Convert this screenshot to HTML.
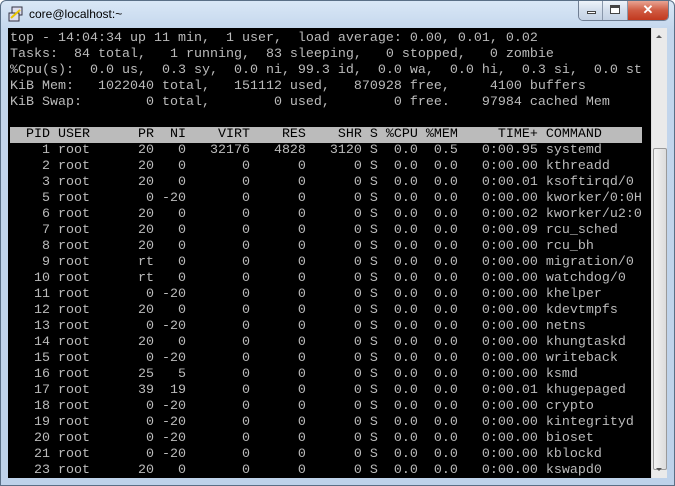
<!DOCTYPE html>
<html><head><style>
*{margin:0;padding:0;box-sizing:border-box}
body{width:675px;height:486px;overflow:hidden;background:#fff;position:relative;font-family:"Liberation Sans",sans-serif}
.frame{position:absolute;left:0;top:0;width:675px;height:486px;border:1px solid #5a6f86;border-radius:6px 6px 0 0;background:linear-gradient(#d9e7f6,#c3d6ec 30px,#bed2ea);}
.title{position:absolute;left:28px;top:6px;font-size:12px;color:#000}
.icon{position:absolute;left:7px;top:5px;width:16px;height:16px}
.btns{position:absolute;left:577px;top:0;height:20px;width:91px;border:1px solid #6f7e93;border-top:none;border-radius:0 0 5px 5px;overflow:hidden;display:flex}
.b{width:25px;height:19px;background:linear-gradient(#eef3fa,#d3deec 50%,#c4d2e4);border-right:1px solid #8a98ab;position:relative}
.c{width:41px;height:19px;background:linear-gradient(#e8a493,#cf5a41 50%,#c2391f);position:relative;color:#fff;font-weight:bold;font-size:13px;text-align:center;line-height:18px}
.term{position:absolute;left:8px;top:28px;width:643px;height:450px;background:#000}
pre{position:absolute;left:2px;top:3px;font-family:"Liberation Mono",monospace;font-size:13.33px;line-height:16px;color:#bbbbbb;white-space:pre}
.hl{background:#bbbbbb;color:#000;display:inline-block;width:632px}
.sb{position:absolute;left:651px;top:28px;width:16px;height:450px;background:#eaeaea;border-left:1px solid #ddd}
.thumb{position:absolute;left:1px;top:120px;width:14px;height:322px;border:1px solid #9a9a9a;border-radius:2px;background:linear-gradient(90deg,#f2f2f2,#dcdcdc)}
.ar{position:absolute;left:4px;width:0;height:0;border-left:3px solid transparent;border-right:3px solid transparent}
</style></head><body>
<div class="frame">
<svg class="icon" viewBox="0 0 16 16"><rect x="4" y="1" width="10" height="8" fill="#dde" stroke="#334"/><rect x="1" y="7" width="10" height="8" fill="#dde" stroke="#334"/><path d="M3 12 L12 4" stroke="#e8c400" stroke-width="2"/></svg>
<div class="title">core@localhost:~</div>
<div class="btns"><div class="b"><div style="position:absolute;left:8px;top:10px;width:9px;height:3px;border:1px solid #444;background:#fff"></div></div><div class="b"><div style="position:absolute;left:7px;top:4px;width:10px;height:9px;border:1px solid #444;border-top-width:3px;background:#fff"></div></div><div class="c">✕</div></div>
</div>
<div class="term"><pre>top - 14:04:34 up 11 min,  1 user,  load average: 0.00, 0.01, 0.02
Tasks:  84 total,   1 running,  83 sleeping,   0 stopped,   0 zombie
%Cpu(s):  0.0 us,  0.3 sy,  0.0 ni, 99.3 id,  0.0 wa,  0.0 hi,  0.3 si,  0.0 st
KiB Mem:   1022040 total,   151112 used,   870928 free,     4100 buffers
KiB Swap:        0 total,        0 used,        0 free.    97984 cached Mem

<span class="hl">  PID USER      PR  NI    VIRT    RES    SHR S %CPU %MEM     TIME+ COMMAND</span>
    1 root      20   0   32176   4828   3120 S  0.0  0.5   0:00.95 systemd
    2 root      20   0       0      0      0 S  0.0  0.0   0:00.00 kthreadd
    3 root      20   0       0      0      0 S  0.0  0.0   0:00.01 ksoftirqd/0
    5 root       0 -20       0      0      0 S  0.0  0.0   0:00.00 kworker/0:0H
    6 root      20   0       0      0      0 S  0.0  0.0   0:00.02 kworker/u2:0
    7 root      20   0       0      0      0 S  0.0  0.0   0:00.09 rcu_sched
    8 root      20   0       0      0      0 S  0.0  0.0   0:00.00 rcu_bh
    9 root      rt   0       0      0      0 S  0.0  0.0   0:00.00 migration/0
   10 root      rt   0       0      0      0 S  0.0  0.0   0:00.00 watchdog/0
   11 root       0 -20       0      0      0 S  0.0  0.0   0:00.00 khelper
   12 root      20   0       0      0      0 S  0.0  0.0   0:00.00 kdevtmpfs
   13 root       0 -20       0      0      0 S  0.0  0.0   0:00.00 netns
   14 root      20   0       0      0      0 S  0.0  0.0   0:00.00 khungtaskd
   15 root       0 -20       0      0      0 S  0.0  0.0   0:00.00 writeback
   16 root      25   5       0      0      0 S  0.0  0.0   0:00.00 ksmd
   17 root      39  19       0      0      0 S  0.0  0.0   0:00.01 khugepaged
   18 root       0 -20       0      0      0 S  0.0  0.0   0:00.00 crypto
   19 root       0 -20       0      0      0 S  0.0  0.0   0:00.00 kintegrityd
   20 root       0 -20       0      0      0 S  0.0  0.0   0:00.00 bioset
   21 root       0 -20       0      0      0 S  0.0  0.0   0:00.00 kblockd
   23 root      20   0       0      0      0 S  0.0  0.0   0:00.00 kswapd0</pre></div>
<div class="sb"><div class="ar" style="top:7px;border-bottom:3px solid #555"></div><div class="thumb"></div><div class="ar" style="top:440px;border-top:3px solid #555"></div></div>
</body></html>
